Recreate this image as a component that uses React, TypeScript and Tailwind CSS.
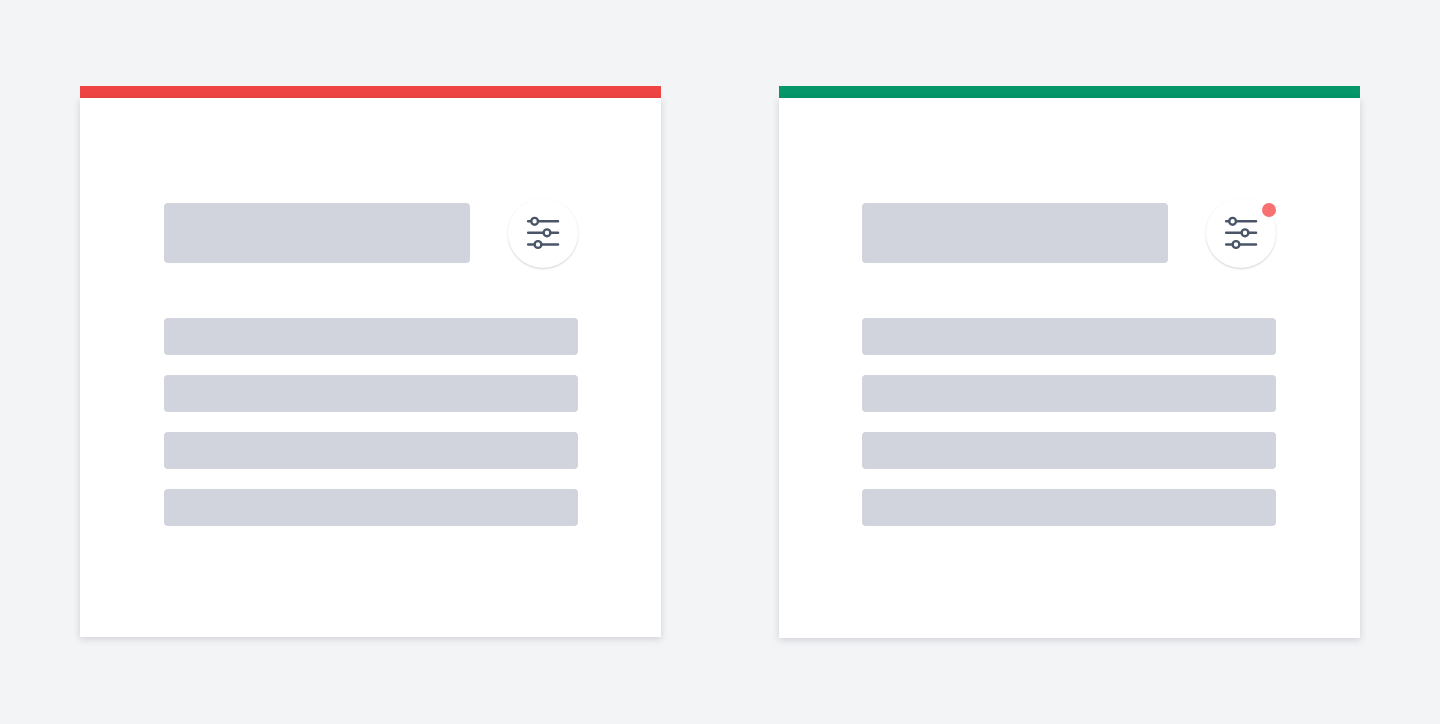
import React from "react";

function SlidersIcon() {
  return (
    <svg width="34" height="34" viewBox="0 0 34 34" fill="none" stroke="#4a5568" strokeWidth="2.4" strokeLinecap="round" aria-hidden="true">
      <path d="M2.1 5.3H5.2M12 5.3H32.1" />
      <circle cx="8.6" cy="5.3" r="3.4" />
      <path d="M2.1 16.8H17.6M24.4 16.8H32.1" />
      <circle cx="21" cy="16.8" r="3.4" />
      <path d="M2.1 28.5H8.6M15.4 28.5H32.1" />
      <circle cx="12" cy="28.5" r="3.4" />
    </svg>
  );
}

function Panel({ accent, padding, active = false }: { accent: string; padding: string; active?: boolean }) {
  return (
    <section className="w-full max-w-[581px]">
      <div className={`h-3 ${accent}`} />
      <div className={`bg-white pt-[100px] shadow-[0_2px_7px_rgba(30,35,60,0.17)] ${padding}`}>
        <div className="flex items-center justify-between gap-[38px]">
          <div className="h-[60px] flex-1 rounded bg-[#d1d4dc]" />
          <button
            type="button"
            aria-label="Filters"
            className="relative flex size-[70px] shrink-0 items-center justify-center rounded-full bg-white shadow-[0_1px_2px_rgba(0,0,0,0.18)]"
          >
            <SlidersIcon />
            {active && <span className="absolute top-[5px] right-0 size-3.5 rounded-full bg-[#f87171]" />}
          </button>
        </div>
        <div className="mt-[50px] flex flex-col gap-5">
          {[0, 1, 2, 3].map((row) => (
            <div key={row} className="h-[37px] rounded bg-[#d1d4dc]" />
          ))}
        </div>
      </div>
    </section>
  );
}

export default function App() {
  return (
    <main className="flex min-h-screen items-start justify-between gap-10 bg-[#f3f4f6] px-20 py-[86px]">
      <Panel accent="bg-[#ef4444]" padding="pr-[83px] pb-[111px] pl-[84px]" />
      <Panel accent="bg-[#059669]" padding="pr-[84px] pb-[112px] pl-[83px]" active />
    </main>
  );
}
